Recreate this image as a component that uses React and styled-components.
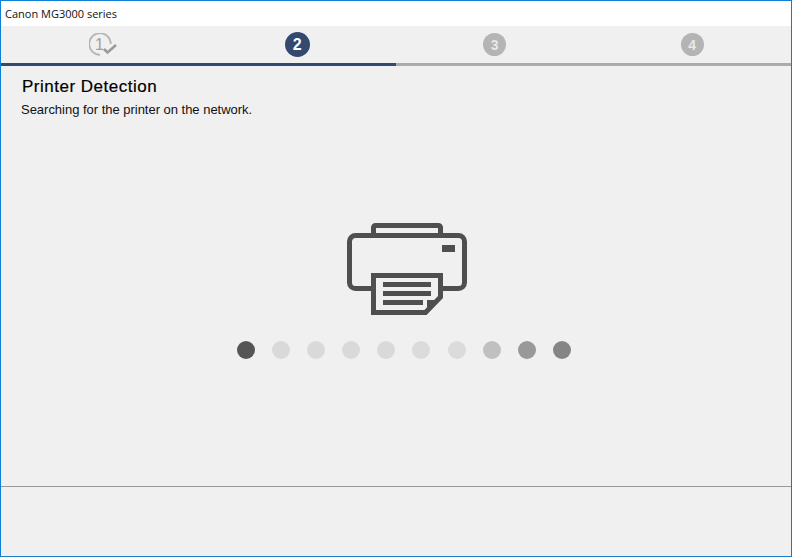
import React from "react";
import styled, { createGlobalStyle } from "styled-components";

const Global = createGlobalStyle`
  html, body { margin: 0; padding: 0; background: #f0f0f0; }
  * { box-sizing: border-box; }
`;

const Window = styled.div`
  width: 792px;
  height: 557px;
  display: flex;
  flex-direction: column;
  background: #f0f0f0;
  border-top: 1px solid #0f80d8;
  border-bottom: 1px solid #1a7cc8;
  border-left: 1px solid #0f80d8;
  border-right: 1px solid #1f78bd;
  font-family: "Liberation Sans", Arial, sans-serif;
  color: #000;
`;

const TitleBar = styled.div`
  height: 25px;
  flex: none;
  background: #fff;
  padding: 0 0 0 4px;
  display: flex;
  align-items: center;
  font-family: "Open Sans", "Noto Sans", sans-serif;
  font-size: 11px;
  color: #111;
`;

const Steps = styled.div`
  height: 37px;
  flex: none;
  display: grid;
  grid-template-columns: repeat(4, 1fr);
  align-items: center;
  justify-items: center;
`;

const StepCircle = styled.div`
  width: ${(p) => (p.$active ? 25 : 23)}px;
  height: ${(p) => (p.$active ? 25 : 23)}px;
  border-radius: 50%;
  background: ${(p) => (p.$active ? "#34496f" : "#b4b4b4")};
  color: ${(p) => (p.$active ? "#fff" : "#e8e8e8")};
  display: flex;
  align-items: center;
  justify-content: center;
  font-size: ${(p) => (p.$active ? 16 : 14)}px;
  font-weight: 700;
  line-height: 1;
`;

const DoneIcon = styled.svg`
  display: block;
  width: 30px;
  height: 24px;
  transform: translateX(4px);
`;

const Progress = styled.div`
  height: 3px;
  flex: none;
  display: grid;
  grid-template-columns: 395px 1fr;
`;

const ProgressPart = styled.div`
  background: ${(p) => (p.$done ? "#34496f" : "#ababab")};
`;

const Content = styled.main`
  flex: 1;
  display: flex;
  flex-direction: column;
  padding: 11px 0 0 20px;
`;

const Heading = styled.h1`
  margin: 0 0 0 1px;
  font-size: 17px;
  line-height: 20px;
  font-weight: 400;
  letter-spacing: 0.5px;
  color: #000;
  -webkit-text-stroke: 0.2px #000;
`;

const Message = styled.p`
  margin: 5px 0 0;
  font-size: 13px;
  line-height: 16px;
  letter-spacing: -0.02px;
  color: #111;
`;

const Graphic = styled.div`
  margin-top: 103px;
  display: flex;
  flex-direction: column;
  align-items: flex-start;
`;

const PrinterIcon = styled.svg`
  display: block;
  width: 122px;
  height: 94px;
  margin-left: 325px;
`;

const Dots = styled.div`
  margin: 26px 0 0 216px;
  display: flex;
  gap: 17.1px;
`;

const Dot = styled.span`
  display: block;
  width: 18px;
  height: 18px;
  border-radius: 50%;
  background: ${(p) => p.$color};
`;

const Footer = styled.footer`
  height: 70px;
  flex: none;
  border-top: 1px solid #9a9a9a;
`;

const dots = ["#555555", "#d9d9d9", "#d9d9d9", "#d9d9d9", "#d9d9d9", "#dbdbdb", "#dbdbdb", "#c0c0c0", "#999999", "#858585"];

export default function App() {
  return (
    <Window>
      <Global />
      <TitleBar>Canon MG3000 series</TitleBar>
      <Steps>
        <DoneIcon viewBox="0 0 30 24">
          <path d="M21.800 11A10.800 10.800 0 1 0 11 21.800" fill="none" stroke="#b4b4b4" strokeWidth="1.7" />
          <text x="10.500" y="17" textAnchor="middle" fontFamily="Liberation Sans" fontSize="16" fill="#a0a0a0">1</text>
          <path d="M15 16l3.500 3.500 8.500-7.500" fill="none" stroke="#9a9a9a" strokeWidth="2.6" />
        </DoneIcon>
        <StepCircle $active>2</StepCircle>
        <StepCircle>3</StepCircle>
        <StepCircle>4</StepCircle>
      </Steps>
      <Progress>
        <ProgressPart $done />
        <ProgressPart />
      </Progress>
      <Content>
        <Heading>Printer Detection</Heading>
        <Message>Searching for the printer on the network.</Message>
        <Graphic>
          <PrinterIcon viewBox="0 0 122 94" aria-hidden="true">
            <g fill="none" stroke="#4f4f4f" strokeWidth="5">
              <path d="M27.500 14V6.500a2 2 0 0 1 2-2h63a2 2 0 0 1 2 2V14" />
              <path d="M26 67.500H9.500a6 6 0 0 1-6-6V20.500a6 6 0 0 1 6-6h103a6 6 0 0 1 6 6V61.500a6 6 0 0 1-6 6H96" />
              <path d="M27.500 91.500V54.500h67V76L79.500 91.500z" />
            </g>
            <g fill="#4f4f4f">
              <rect x="96" y="24" width="13" height="7" />
              <rect x="37" y="61" width="48" height="5" />
              <rect x="37" y="70" width="48" height="5" />
              <rect x="37" y="79" width="40" height="5" />
              <path d="M81 79h11L81 90z" />
            </g>
          </PrinterIcon>
          <Dots>
            {dots.map((c, i) => (
              <Dot key={i} $color={c} />
            ))}
          </Dots>
        </Graphic>
      </Content>
      <Footer />
    </Window>
  );
}
